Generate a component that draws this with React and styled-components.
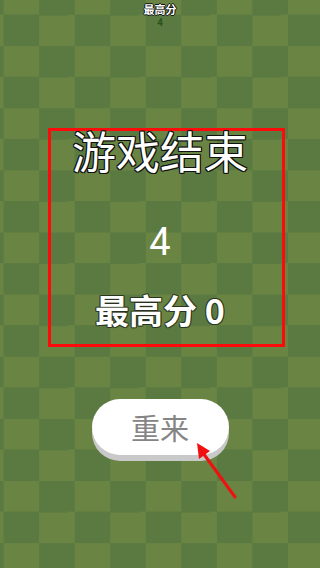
import React from 'react';
import styled, { createGlobalStyle } from 'styled-components';

const GlobalStyle = createGlobalStyle`
  html, body {
    margin: 0;
    padding: 0;
  }
  body {
    font-family: "Noto Sans", "Noto Sans CJK SC", sans-serif;
  }
`;

const Board = styled.div`
  position: relative;
  width: 320px;
  height: 568px;
  overflow: hidden;
  display: flex;
  flex-direction: column;
  align-items: center;
  background: repeating-conic-gradient(#6a8443 0 25%, #5a7a42 0 50%);
  background-size: 71.11px 62.14px;
  background-position: -32px -16px;
`;

const TopScore = styled.div`
  display: flex;
  flex-direction: column;
  align-items: center;
  padding-top: 2px;
`;

const TopLabel = styled.div`
  font-family: "Noto Sans CJK SC", sans-serif;
  font-size: 11px;
  font-weight: 700;
  line-height: 15px;
  color: #fff;
  text-shadow: -1px 0 #111, 1px 0 #111, 0 -1px #111, 0 1px #111;
`;

const TopValue = styled.div`
  font-family: Roboto, sans-serif;
  font-size: 10px;
  font-weight: 700;
  line-height: 12px;
  color: #2a521e;
`;

const Panel = styled.div`
  align-self: flex-start;
  margin: 99px 0 0 48px;
  width: 237px;
  height: 219px;
  box-sizing: border-box;
  border: 3px solid #ff0a0a;
  padding-right: 13px;
  display: flex;
  flex-direction: column;
  align-items: center;
`;

const outline = (c, w = 1) => `
  text-shadow: -${w}px 0 ${c}, ${w}px 0 ${c}, 0 -${w}px ${c}, 0 ${w}px ${c},
    -${w}px -${w}px ${c}, ${w}px ${w}px ${c}, -${w}px ${w}px ${c}, ${w}px -${w}px ${c};
`;

const Title = styled.div`
  margin-top: -3px;
  font-family: "Noto Sans CJK SC", sans-serif;
  font-size: 44px;
  line-height: 44px;
  color: #fff;
  ${outline('#111')}
`;

const Score = styled.div`
  margin-top: 48px;
  font-family: Roboto, sans-serif;
  font-size: 38px;
  font-weight: 400;
  line-height: 44px;
  color: #fff;
`;

const Best = styled.div`
  margin-top: 26px;
  font-family: "Noto Sans CJK SC", sans-serif;
  font-size: 34px;
  font-weight: 700;
  line-height: 40px;
  color: #fff;
  ${outline('rgba(40,50,30,0.7)')}
`;

const RestartButton = styled.button`
  margin-top: 52px;
  width: 137px;
  height: 56px;
  border: none;
  border-radius: 28px;
  background: #fff;
  box-shadow: 0 6px 0 #c9c9c9;
  font-family: "Noto Sans CJK SC", sans-serif;
  font-size: 29px;
  line-height: 56px;
  color: #858585;
  padding: 0;
  cursor: pointer;
`;

const Arrow = styled.svg`
  position: absolute;
  left: 190px;
  top: 436px;
  width: 52px;
  height: 66px;
`;

export default function App() {
  return (
    <>
      <GlobalStyle />
      <Board>
        <TopScore>
          <TopLabel>最高分</TopLabel>
          <TopValue>4</TopValue>
        </TopScore>
        <Panel>
          <Title>游戏结束</Title>
          <Score>4</Score>
          <Best>最高分 0</Best>
        </Panel>
        <RestartButton>重来</RestartButton>
        <Arrow viewBox="0 0 52 66">
          <line x1="45" y1="61" x2="13" y2="17" stroke="#f01010" strokeWidth="3" strokeLinecap="round" />
          <polygon points="7,7 9,23 20,15" fill="#f01010" />
        </Arrow>
      </Board>
    </>
  );
}
